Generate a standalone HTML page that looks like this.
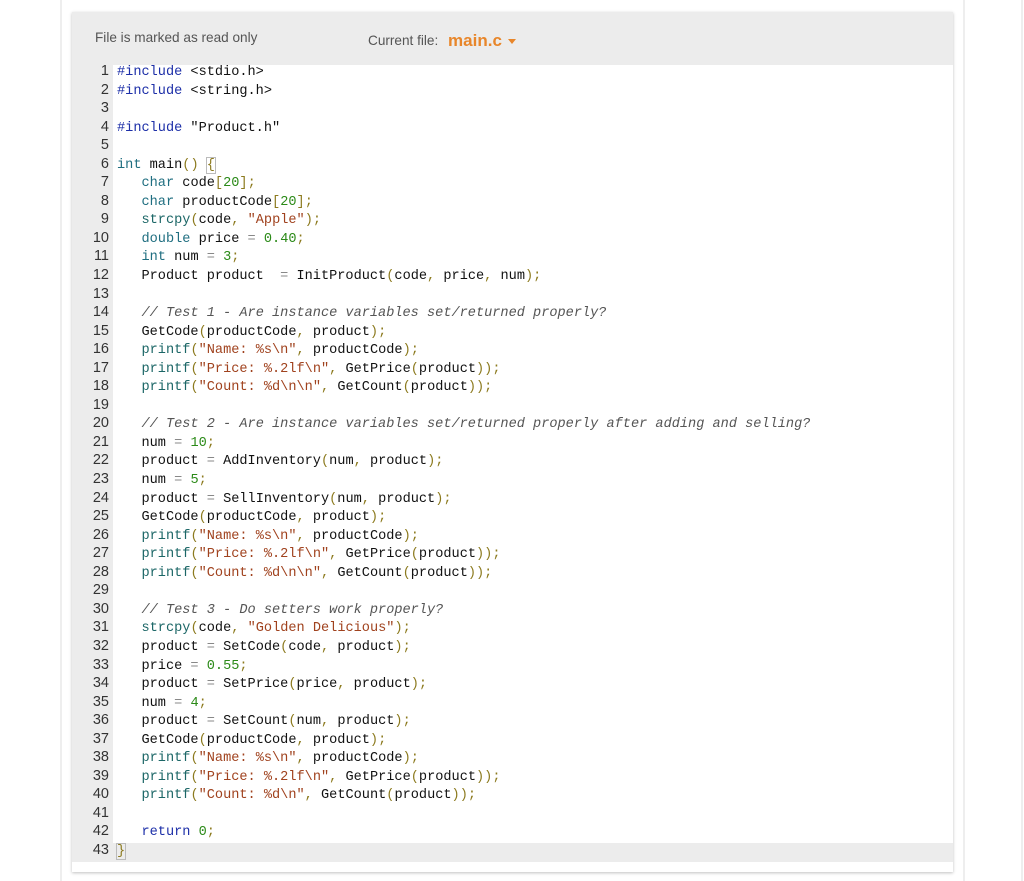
<!DOCTYPE html>
<html><head><meta charset="utf-8"><style>
body{margin:0;background:#fff;width:1024px;height:881px;overflow:hidden;position:relative;font-family:"Liberation Sans",sans-serif}
.vl{position:absolute;top:0;bottom:0;width:2px;background:#eee}
#panel{position:absolute;left:72px;top:12px;width:881px;height:860px;background:#fff;box-shadow:0 1px 3px rgba(0,0,0,.25)}
#hdr{position:absolute;left:0;top:0;width:881px;height:53px;background:#ececec;font-size:13.6px;color:#555}
#hdr .l{position:absolute;left:23px;top:18px}
#hdr .r{position:absolute;left:296px;top:18px}
#hdr .f{color:#e8862a;font-size:17px;font-weight:bold;margin-left:6px;position:relative;top:1px}
#hdr .tri{display:inline-block;width:0;height:0;border-left:4px solid transparent;border-right:4px solid transparent;border-top:5px solid #e8862a;margin-left:6px;vertical-align:middle}
#code{position:absolute;left:0;top:53px;width:881px;height:807px;overflow:hidden}
#gut{position:absolute;left:0;top:0;width:41px;height:794px;background:#ececec}
#lines{position:absolute;left:0;top:-1px;width:881px;font-family:"Liberation Mono",monospace;font-size:13.6px}
.ln{height:18.55px;line-height:18.55px;white-space:pre;position:relative}
.ln .n{position:absolute;left:0;top:-2px;width:37px;text-align:right;color:#333;font-family:"Liberation Sans",sans-serif;font-size:14.5px}
.ln .c{position:absolute;left:45px;color:#111}
.cur{background:#ececec}
.k{color:#1d2fa8}.t{color:#1f6e80}.s{color:#a0421e}.num{color:#2b8a18}.p{color:#8c7a1e}.f{color:#1b6666}.o{color:#888}.cm{color:#555;font-style:italic}
.br{outline:1px solid #bbb}
</style></head><body>
<div class="vl" style="left:60px"></div><div class="vl" style="left:963px"></div><div class="vl" style="left:1021px"></div>
<div id="panel">
<div id="hdr"><span class="l">File is marked as read only</span><span class="r">Current file: <span class="f">main.c</span><span class="tri"></span></span></div>
<div id="code"><div id="gut"></div><div id="lines">
<div class="ln"><span class="n">1</span><span class="c"><span class="k">#include</span> &lt;stdio.h&gt;</span></div>
<div class="ln"><span class="n">2</span><span class="c"><span class="k">#include</span> &lt;string.h&gt;</span></div>
<div class="ln"><span class="n">3</span><span class="c"></span></div>
<div class="ln"><span class="n">4</span><span class="c"><span class="k">#include</span> "Product.h"</span></div>
<div class="ln"><span class="n">5</span><span class="c"></span></div>
<div class="ln"><span class="n">6</span><span class="c"><span class="t">int</span> main<span class="p">()</span> <span class="p br">{</span></span></div>
<div class="ln"><span class="n">7</span><span class="c">   <span class="t">char</span> code<span class="p">[</span><span class="num">20</span><span class="p">];</span></span></div>
<div class="ln"><span class="n">8</span><span class="c">   <span class="t">char</span> productCode<span class="p">[</span><span class="num">20</span><span class="p">];</span></span></div>
<div class="ln"><span class="n">9</span><span class="c">   <span class="f">strcpy</span><span class="p">(</span>code<span class="p">,</span> <span class="s">"Apple"</span><span class="p">);</span></span></div>
<div class="ln"><span class="n">10</span><span class="c">   <span class="t">double</span> price <span class="o">=</span> <span class="num">0.40</span><span class="p">;</span></span></div>
<div class="ln"><span class="n">11</span><span class="c">   <span class="t">int</span> num <span class="o">=</span> <span class="num">3</span><span class="p">;</span></span></div>
<div class="ln"><span class="n">12</span><span class="c">   Product product  <span class="o">=</span> InitProduct<span class="p">(</span>code<span class="p">,</span> price<span class="p">,</span> num<span class="p">);</span></span></div>
<div class="ln"><span class="n">13</span><span class="c"></span></div>
<div class="ln"><span class="n">14</span><span class="c">   <span class="cm">// Test 1 - Are instance variables set/returned properly?</span></span></div>
<div class="ln"><span class="n">15</span><span class="c">   GetCode<span class="p">(</span>productCode<span class="p">,</span> product<span class="p">);</span></span></div>
<div class="ln"><span class="n">16</span><span class="c">   <span class="f">printf</span><span class="p">(</span><span class="s">"Name: %s\n"</span><span class="p">,</span> productCode<span class="p">);</span></span></div>
<div class="ln"><span class="n">17</span><span class="c">   <span class="f">printf</span><span class="p">(</span><span class="s">"Price: %.2lf\n"</span><span class="p">,</span> GetPrice<span class="p">(</span>product<span class="p">));</span></span></div>
<div class="ln"><span class="n">18</span><span class="c">   <span class="f">printf</span><span class="p">(</span><span class="s">"Count: %d\n\n"</span><span class="p">,</span> GetCount<span class="p">(</span>product<span class="p">));</span></span></div>
<div class="ln"><span class="n">19</span><span class="c"></span></div>
<div class="ln"><span class="n">20</span><span class="c">   <span class="cm">// Test 2 - Are instance variables set/returned properly after adding and selling?</span></span></div>
<div class="ln"><span class="n">21</span><span class="c">   num <span class="o">=</span> <span class="num">10</span><span class="p">;</span></span></div>
<div class="ln"><span class="n">22</span><span class="c">   product <span class="o">=</span> AddInventory<span class="p">(</span>num<span class="p">,</span> product<span class="p">);</span></span></div>
<div class="ln"><span class="n">23</span><span class="c">   num <span class="o">=</span> <span class="num">5</span><span class="p">;</span></span></div>
<div class="ln"><span class="n">24</span><span class="c">   product <span class="o">=</span> SellInventory<span class="p">(</span>num<span class="p">,</span> product<span class="p">);</span></span></div>
<div class="ln"><span class="n">25</span><span class="c">   GetCode<span class="p">(</span>productCode<span class="p">,</span> product<span class="p">);</span></span></div>
<div class="ln"><span class="n">26</span><span class="c">   <span class="f">printf</span><span class="p">(</span><span class="s">"Name: %s\n"</span><span class="p">,</span> productCode<span class="p">);</span></span></div>
<div class="ln"><span class="n">27</span><span class="c">   <span class="f">printf</span><span class="p">(</span><span class="s">"Price: %.2lf\n"</span><span class="p">,</span> GetPrice<span class="p">(</span>product<span class="p">));</span></span></div>
<div class="ln"><span class="n">28</span><span class="c">   <span class="f">printf</span><span class="p">(</span><span class="s">"Count: %d\n\n"</span><span class="p">,</span> GetCount<span class="p">(</span>product<span class="p">));</span></span></div>
<div class="ln"><span class="n">29</span><span class="c"></span></div>
<div class="ln"><span class="n">30</span><span class="c">   <span class="cm">// Test 3 - Do setters work properly?</span></span></div>
<div class="ln"><span class="n">31</span><span class="c">   <span class="f">strcpy</span><span class="p">(</span>code<span class="p">,</span> <span class="s">"Golden Delicious"</span><span class="p">);</span></span></div>
<div class="ln"><span class="n">32</span><span class="c">   product <span class="o">=</span> SetCode<span class="p">(</span>code<span class="p">,</span> product<span class="p">);</span></span></div>
<div class="ln"><span class="n">33</span><span class="c">   price <span class="o">=</span> <span class="num">0.55</span><span class="p">;</span></span></div>
<div class="ln"><span class="n">34</span><span class="c">   product <span class="o">=</span> SetPrice<span class="p">(</span>price<span class="p">,</span> product<span class="p">);</span></span></div>
<div class="ln"><span class="n">35</span><span class="c">   num <span class="o">=</span> <span class="num">4</span><span class="p">;</span></span></div>
<div class="ln"><span class="n">36</span><span class="c">   product <span class="o">=</span> SetCount<span class="p">(</span>num<span class="p">,</span> product<span class="p">);</span></span></div>
<div class="ln"><span class="n">37</span><span class="c">   GetCode<span class="p">(</span>productCode<span class="p">,</span> product<span class="p">);</span></span></div>
<div class="ln"><span class="n">38</span><span class="c">   <span class="f">printf</span><span class="p">(</span><span class="s">"Name: %s\n"</span><span class="p">,</span> productCode<span class="p">);</span></span></div>
<div class="ln"><span class="n">39</span><span class="c">   <span class="f">printf</span><span class="p">(</span><span class="s">"Price: %.2lf\n"</span><span class="p">,</span> GetPrice<span class="p">(</span>product<span class="p">));</span></span></div>
<div class="ln"><span class="n">40</span><span class="c">   <span class="f">printf</span><span class="p">(</span><span class="s">"Count: %d\n"</span><span class="p">,</span> GetCount<span class="p">(</span>product<span class="p">));</span></span></div>
<div class="ln"><span class="n">41</span><span class="c"></span></div>
<div class="ln"><span class="n">42</span><span class="c">   <span class="k">return</span> <span class="num">0</span><span class="p">;</span></span></div>
<div class="ln cur"><span class="n">43</span><span class="c"><span class="p br">}</span></span></div>
</div></div>
</div>
</body></html>
